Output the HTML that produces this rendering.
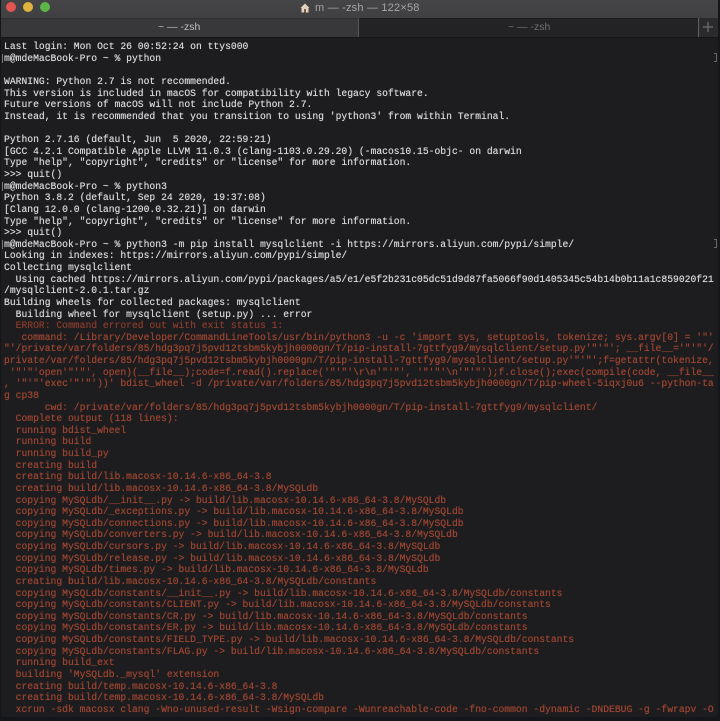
<!DOCTYPE html>
<html><head><meta charset="utf-8"><title>Terminal</title>
<style>
html,body{margin:0;padding:0;background:#15161a;width:720px;height:721px;overflow:hidden}
#w{position:absolute;left:1px;top:0;width:717px;height:717px;background:#1d1d1f;overflow:hidden;border-radius:0 0 4px 4px}
#tb{position:absolute;left:0;top:0;width:717px;height:18px;background:linear-gradient(#454547,#404042)}
.d{position:absolute;top:2px;width:10px;height:10px;border-radius:50%}
#ttl{position:absolute;left:314px;top:0;font:11px/16px "Liberation Sans",sans-serif;color:#a5a5a6;white-space:pre;letter-spacing:.2px;filter:blur(.25px)}
#tab1{position:absolute;left:0;top:18px;width:357px;height:19px;background:#38383a;box-shadow:inset 0 1px 0 #303032}
#tab2{position:absolute;left:357px;top:18px;width:340px;height:19px;background:#232325;box-shadow:inset 0 1px 0 #1d1d1f}
#tab3{position:absolute;left:697px;top:18px;width:20px;height:19px;background:#2b2b2d}
.sep{position:absolute;top:18px;width:1px;height:19px;background:#56565a}
.tt{position:absolute;top:20px;font:10.5px/15px "Liberation Sans",sans-serif;white-space:pre;filter:blur(.25px)}
#line{position:absolute;left:0;top:37px;width:717px;height:1px;background:#151517}
#plus{position:absolute;left:702px;top:22px;width:10px;height:10px}
pre{position:absolute;left:3px;top:41.2px;margin:0;font:9.7px/11.63px "Liberation Mono",monospace;letter-spacing:.004px;color:#d6d6d6;filter:blur(.35px);white-space:pre;text-shadow:0 0 .5px currentColor}
.r{color:#9c4531}
.e{color:#863b2c}
.c{position:absolute;left:1px;width:1px;height:9px;background:#77777a}
.cr{position:absolute;left:713px;width:3px;height:9px;border:1px solid #66666a;border-left:0;box-sizing:border-box}
</style></head><body>
<div id="w">
<div id="tb"></div>
<div class="d" style="left:5px;background:#e1564f"></div>
<div class="d" style="left:22px;background:#e2b23e"></div>
<div class="d" style="left:39px;background:#5cb547"></div>
<svg style="position:absolute;left:299px;top:3px" width="10" height="10" viewBox="0 0 10 10"><path d="M5 0.5L0.5 5H1.5V9.5H8.5V5H9.5Z" fill="#e0d2bd"/><rect x="4" y="6" width="2" height="3.5" fill="#7a5a40"/></svg>
<div id="ttl">m — -zsh — 122×58</div>
<div id="tab1"></div><div id="tab2"></div><div id="tab3"></div>
<div class="sep" style="left:357px"></div>
<div class="sep" style="left:697px;background:#626266"></div>
<div class="tt" style="left:157px;color:#bdbdbe">~ — -zsh</div>
<div class="tt" style="left:507px;color:#707072">~ — -zsh</div>
<svg id="plus" viewBox="0 0 10 10"><path d="M5 0V10M0 5H10" stroke="#7c7c7e" stroke-width="1"/></svg>
<div id="line"></div>
<div class="c" style="top:54px"></div>
<div class="c" style="top:182px"></div>
<div class="c" style="top:240px"></div>
<div class="cr" style="top:53px"></div>
<div class="cr" style="top:239px"></div>
<pre>Last login: Mon Oct 26 00:52:24 on ttys000
m@mdeMacBook-Pro ~ % python

WARNING: Python 2.7 is not recommended.
This version is included in macOS for compatibility with legacy software.
Future versions of macOS will not include Python 2.7.
Instead, it is recommended that you transition to using 'python3' from within Terminal.

Python 2.7.16 (default, Jun  5 2020, 22:59:21)
[GCC 4.2.1 Compatible Apple LLVM 11.0.3 (clang-1103.0.29.20) (-macos10.15-objc- on darwin
Type "help", "copyright", "credits" or "license" for more information.
&gt;&gt;&gt; quit()
m@mdeMacBook-Pro ~ % python3
Python 3.8.2 (default, Sep 24 2020, 19:37:08)
[Clang 12.0.0 (clang-1200.0.32.21)] on darwin
Type "help", "copyright", "credits" or "license" for more information.
&gt;&gt;&gt; quit()
m@mdeMacBook-Pro ~ % python3 -m pip install mysqlclient -i https://mirrors.aliyun.com/pypi/simple/
Looking in indexes: https://mirrors.aliyun.com/pypi/simple/
Collecting mysqlclient
  Using cached https://mirrors.aliyun.com/pypi/packages/a5/e1/e5f2b231c05dc51d9d87fa5066f90d1405345c54b14b0b11a1c859020f21
/mysqlclient-2.0.1.tar.gz
Building wheels for collected packages: mysqlclient
  Building wheel for mysqlclient (setup.py) ... error
<span class="e">  ERROR: Command errored out with exit status 1:</span>
<span class="r">   command: /Library/Developer/CommandLineTools/usr/bin/python3 -u -c 'import sys, setuptools, tokenize; sys.argv[0] = '"'
"'/private/var/folders/85/hdg3pq7j5pvd12tsbm5kybjh0000gn/T/pip-install-7gttfyg9/mysqlclient/setup.py'"'"'; __file__='"'"'/
private/var/folders/85/hdg3pq7j5pvd12tsbm5kybjh0000gn/T/pip-install-7gttfyg9/mysqlclient/setup.py'"'"';f=getattr(tokenize,
 '"'"'open'"'"', open)(__file__);code=f.read().replace('"'"'\r\n'"'"', '"'"'\n'"'"');f.close();exec(compile(code, __file__
, '"'"'exec'"'"'))' bdist_wheel -d /private/var/folders/85/hdg3pq7j5pvd12tsbm5kybjh0000gn/T/pip-wheel-5iqxj0u6 --python-ta
g cp38
       cwd: /private/var/folders/85/hdg3pq7j5pvd12tsbm5kybjh0000gn/T/pip-install-7gttfyg9/mysqlclient/
  Complete output (118 lines):
  running bdist_wheel
  running build
  running build_py
  creating build
  creating build/lib.macosx-10.14.6-x86_64-3.8
  creating build/lib.macosx-10.14.6-x86_64-3.8/MySQLdb
  copying MySQLdb/__init__.py -&gt; build/lib.macosx-10.14.6-x86_64-3.8/MySQLdb
  copying MySQLdb/_exceptions.py -&gt; build/lib.macosx-10.14.6-x86_64-3.8/MySQLdb
  copying MySQLdb/connections.py -&gt; build/lib.macosx-10.14.6-x86_64-3.8/MySQLdb
  copying MySQLdb/converters.py -&gt; build/lib.macosx-10.14.6-x86_64-3.8/MySQLdb
  copying MySQLdb/cursors.py -&gt; build/lib.macosx-10.14.6-x86_64-3.8/MySQLdb
  copying MySQLdb/release.py -&gt; build/lib.macosx-10.14.6-x86_64-3.8/MySQLdb
  copying MySQLdb/times.py -&gt; build/lib.macosx-10.14.6-x86_64-3.8/MySQLdb
  creating build/lib.macosx-10.14.6-x86_64-3.8/MySQLdb/constants
  copying MySQLdb/constants/__init__.py -&gt; build/lib.macosx-10.14.6-x86_64-3.8/MySQLdb/constants
  copying MySQLdb/constants/CLIENT.py -&gt; build/lib.macosx-10.14.6-x86_64-3.8/MySQLdb/constants
  copying MySQLdb/constants/CR.py -&gt; build/lib.macosx-10.14.6-x86_64-3.8/MySQLdb/constants
  copying MySQLdb/constants/ER.py -&gt; build/lib.macosx-10.14.6-x86_64-3.8/MySQLdb/constants
  copying MySQLdb/constants/FIELD_TYPE.py -&gt; build/lib.macosx-10.14.6-x86_64-3.8/MySQLdb/constants
  copying MySQLdb/constants/FLAG.py -&gt; build/lib.macosx-10.14.6-x86_64-3.8/MySQLdb/constants
  running build_ext
  building 'MySQLdb._mysql' extension
  creating build/temp.macosx-10.14.6-x86_64-3.8
  creating build/temp.macosx-10.14.6-x86_64-3.8/MySQLdb
  xcrun -sdk macosx clang -Wno-unused-result -Wsign-compare -Wunreachable-code -fno-common -dynamic -DNDEBUG -g -fwrapv -O</span></pre>
</div>
</body></html>
